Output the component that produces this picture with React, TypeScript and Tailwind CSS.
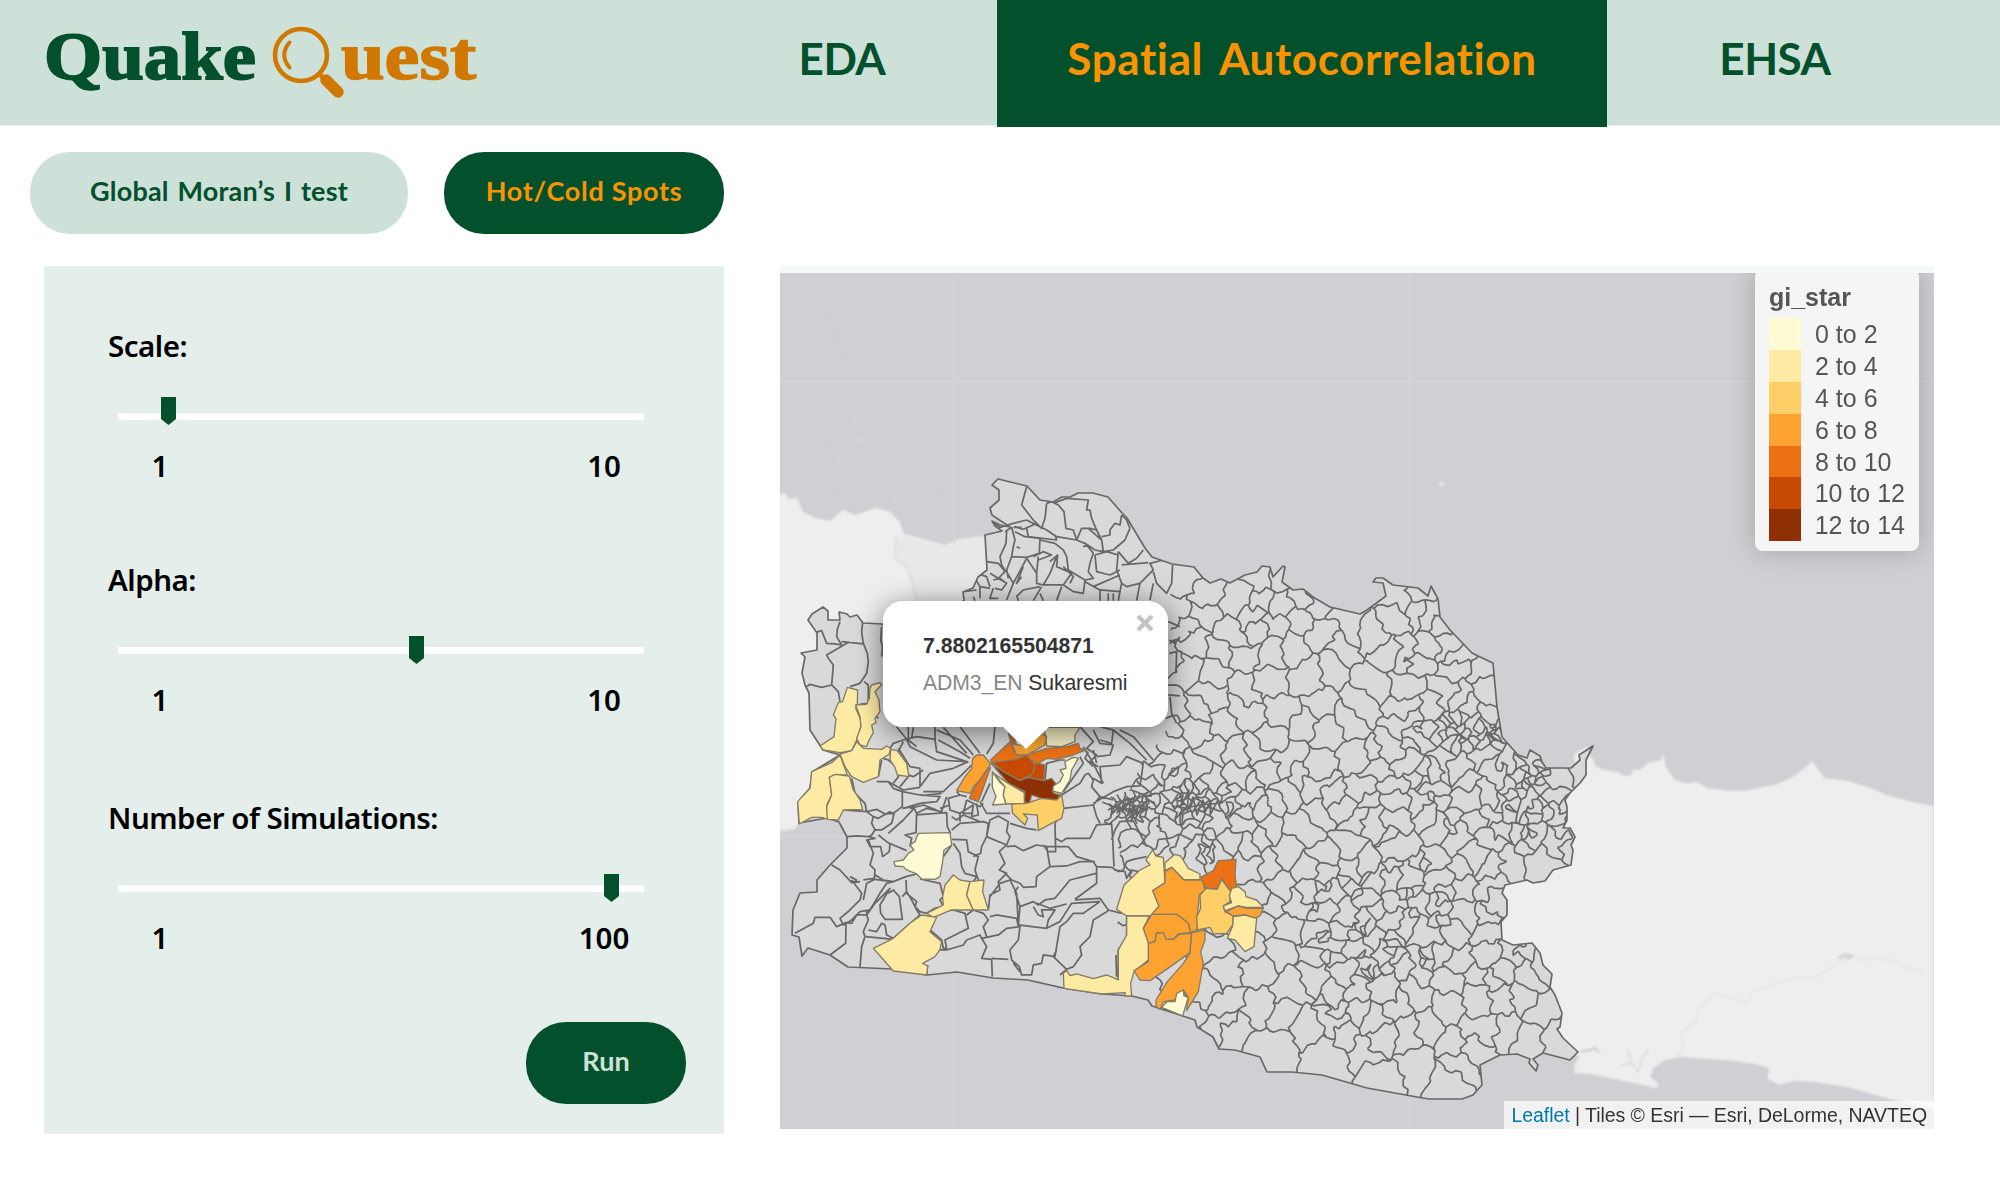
import React from "react";

type Pt = [number, number];

const SANS = "font-['Liberation_Sans',Arial,sans-serif]";

const LAND =
  "808,620 812,614 823,607 828,611 828,620 840,620 839,612 847,614 850,617 857,615 863,623 882,624 900,640 940,625 964,600 963,592 973,588 978,577 987,570 985,535 1002,531 995,526 992,521 1000,525 1010,527 992,515 990,508 999,500 999,490 992,485 998,479 1027,486 1040,500 1053,502 1062,497 1070,497 1078,493 1093,493 1108,497 1122,513 1127,518 1145,548 1152,557 1172,564 1194,567 1203,578 1210,583 1221,579 1230,583 1245,575 1257,572 1262,566 1270,567 1273,577 1283,566 1285,567 1282,582 1293,590 1303,589 1313,597 1330,607 1360,614 1367,610 1386,596 1383,583 1373,582 1376,578 1383,578 1393,585 1418,588 1428,596 1431,586 1438,599 1440,617 1450,630 1472,653 1478,656 1493,663 1497,707 1502,737 1518,755 1527,758 1530,750 1540,756 1542,762 1546,768 1571,768 1580,760 1579,755 1593,746 1586,760 1586,775 1580,783 1570,793 1565,800 1567,807 1567,820 1563,828 1570,828 1575,837 1571,845 1573,850 1571,865 1553,870 1545,881 1533,883 1527,880 1505,885 1502,893 1507,900 1507,915 1501,922 1502,940 1513,945 1532,943 1540,953 1543,965 1552,974 1550,987 1555,995 1562,1013 1560,1027 1557,1029 1563,1038 1578,1052 1570,1060 1543,1053 1533,1059 1538,1065 1536,1071 1529,1063 1530,1059 1517,1054 1500,1055 1480,1065 1482,1085 1473,1095 1462,1099 1429,1099 1417,1097 1367,1088 1322,1075 1292,1072 1267,1072 1260,1057 1235,1050 1219,1049 1213,1037 1197,1027 1195,1020 1152,1006 1148,1000 1132,996 1102,994 1063,988 1028,980 993,978 957,972 927,975 892,969 848,967 830,955 808,948 802,956 799,937 792,935 793,910 800,893 817,892 817,880 830,865 847,848 847,837 839,822 827,818 799,823 798,802 810,788 812,772 840,755 823,750 810,730 809,693 805,685 802,673 805,657 801,653 817,650 817,633";

/* Approximate centres of the districts, in thirds of a pixel from each sheet's origin. */
const SHEETS: { x: number; y: number; pts: number[] }[] = [
  {
    x: 1100, y: 520,
    pts: [250,165,325,215,425,235,470,185,540,190,480,240,545,265,605,235,660,255,320,280,460,290,225,300,260,330,275,370,345,385,405,340,455,340,520,310,600,310,670,330,740,310,815,335,895,300,880,230,950,220,945,280,990,290,255,440,440,420,520,420,590,395,700,440,720,370,610,480,330,470,230,420,340,530,440,520,500,490,820,480,790,550,870,400,920,400,990,380,1050,370,1020,330,1085,410,1150,440,1060,450,940,440,920,510,1040,520,1080,520,1155,520,900,570,1000,560,440,580,540,570,370,610,660,560,600,620,680,650,740,600,330,690,410,690,475,690,530,670,300,640,290,580,230,560,200,620,180,660,110,660,770,720,660,740,560,720,510,760,590,780,330,790,420,780,385,830,450,800,570,830,650,800,700,820,790,800,880,790,830,740,880,690,930,740,1000,820,1000,760,1030,745,1080,760,1100,800,1100,850,960,860,900,850,720,860,950,650,980,620,920,610,1030,620,60,760,150,800,200,750,280,740,60,930,170,930,120,900,1160,580,1130,560,1110,620,1070,640,1190,620,1150,700,1190,760,1240,800,1220,720,1170,830,1230,860,1290,850,1300,720,1370,780,1440,750,1340,830,1380,880,1160,660,1270,760,1310,800],
  },
  {
    x: 1080, y: 800,
    pts: [500,20,560,70,600,20,660,90,720,40,830,50,790,130,890,70,940,60,1030,50,1060,100,1140,110,1180,60,1230,40,1290,40,1350,30,1430,40,1460,130,1340,110,1270,100,1230,120,920,100,960,140,1060,190,860,190,740,170,700,200,610,160,550,110,500,140,500,210,570,210,590,260,660,310,540,290,730,240,820,230,870,230,930,240,990,240,1080,240,1140,200,1180,170,1240,200,1300,180,1370,180,1430,120,1160,270,1220,250,1250,310,1220,330,1070,320,1160,350,1000,320,940,310,850,300,810,340,750,280,720,320,680,270,590,310,560,360,620,370,720,390,800,390,850,370,880,400,940,370,990,360,1040,390,1120,410,1230,400,1290,460,1330,460,1380,490,430,370,410,440,500,430,610,460,440,530,540,510,710,520,790,510,690,470,730,430,840,450,850,500,900,470,960,490,1010,500,1090,530,1080,480,1140,480,1180,520,1230,470,1270,500,1240,550,1330,530,630,560,600,630,530,620,430,620,410,670,570,740,690,680,750,660,760,590,840,560,870,650,840,630,920,570,960,600,1000,580,1110,620,1190,600,1250,590,1320,600,1390,640,1280,690,1200,690,1110,720,1190,740,1030,680,980,700,900,720,860,760,740,770,910,830,990,800,1100,830,1150,790,1350,720,1430,720,800,700,780,620,450,700,340,640,370,580,220,560,260,520,60,430,40,330,100,240,180,170,410,140,350,150,280,150],
  },
  {
    x: 1060, y: 700,
    pts: [180,220,290,220,350,230,250,150,200,410,240,370,320,390,330,430,420,450,490,420,450,370,540,370,590,340,560,310,510,300],
  },
];

/* Dense town clusters: centre, radii, count. */
const CLUSTERS = [
  [1128, 806, 20, 10, 26],
  [1146, 797, 14, 8, 14],
  [1192, 802, 30, 14, 46],
  [1462, 732, 18, 14, 16],
  [1488, 734, 14, 12, 16],
  [1530, 775, 16, 16, 18],
  [1400, 780, 90, 50, 10],
  [1390, 915, 80, 60, 30],
  [1500, 820, 50, 40, 12],
  [1370, 960, 60, 20, 12],
  [1210, 835, 30, 20, 10],
];

type Seed = { p: Pt; g: number };

/* Every district owns a few neighbouring seeds, which gives it an irregular shape. */
function buildSeeds(): Seed[] {
  const seeds: Seed[] = [];
  let s = 7;
  let g = 0;
  const rnd = () => {
    s = (s * 16807) % 2147483647;
    return s / 2147483647;
  };
  SHEETS.forEach(({ x, y, pts }) => {
    for (let i = 0; i < pts.length; i += 2) {
      const cx = x + pts[i] / 3;
      const cy = y + pts[i + 1] / 3;
      g++;
      seeds.push({ p: [cx, cy], g });
      for (let k = 0; k < 3; k++) {
        const a = rnd() * Math.PI * 2;
        const r = 5 + rnd() * 6;
        seeds.push({ p: [cx + Math.cos(a) * r, cy + Math.sin(a) * r], g });
      }
    }
  });
  CLUSTERS.forEach(([cx, cy, rx, ry, n]) => {
    for (let i = 0; i < n; i++) {
      const a = rnd() * Math.PI * 2;
      const r = Math.sqrt(rnd());
      g++;
      seeds.push({ p: [cx + Math.cos(a) * r * rx, cy + Math.sin(a) * r * ry], g });
    }
  });
  return seeds.filter(
    ({ p }, i) => !seeds.slice(0, i).some((q) => Math.hypot(p[0] - q.p[0], p[1] - q.p[1]) < 2.5),
  );
}

function wiggle([x, y]: Pt): Pt {
  return [
    x + 2 * Math.sin(y * 0.41 + x * 0.13) + 0.8 * Math.sin(y * 1.13 - x * 0.7),
    y + 2 * Math.sin(x * 0.37 - y * 0.17) + 0.8 * Math.sin(x * 1.21 + y * 0.6),
  ];
}

function buildBorders(): string {
  const seeds = buildSeeds();
  let d = "";
  seeds.forEach(({ p, g }, i) => {
    let poly: { p: Pt; n: number }[] = [
      { p: [p[0] - 50, p[1] - 50], n: -1 },
      { p: [p[0] + 50, p[1] - 50], n: -1 },
      { p: [p[0] + 50, p[1] + 50], n: -1 },
      { p: [p[0] - 50, p[1] + 50], n: -1 },
    ];
    seeds.forEach(({ p: q }, j) => {
      if (i === j) return;
      const nx = q[0] - p[0];
      const ny = q[1] - p[1];
      if (Math.hypot(nx, ny) > 100) return;
      const mx = (p[0] + q[0]) / 2;
      const my = (p[1] + q[1]) / 2;
      const side = (v: Pt) => (v[0] - mx) * nx + (v[1] - my) * ny;
      const out: { p: Pt; n: number }[] = [];
      poly.forEach((a, k) => {
        const b = poly[(k + 1) % poly.length];
        const sa = side(a.p);
        const sb = side(b.p);
        const t = sa / (sa - sb);
        const c: Pt = [a.p[0] + (b.p[0] - a.p[0]) * t, a.p[1] + (b.p[1] - a.p[1]) * t];
        if (sa <= 0) {
          out.push(a);
          if (sb > 0) out.push({ p: c, n: j });
        } else if (sb <= 0) {
          out.push({ p: c, n: a.n });
        }
      });
      poly = out;
    });
    poly.forEach((a, k) => {
      if (a.n <= i || seeds[a.n].g === g) return;
      const b = poly[(k + 1) % poly.length].p;
      const steps = Math.max(1, Math.round(Math.hypot(b[0] - a.p[0], b[1] - a.p[1]) / 4));
      for (let m = 0; m <= steps; m++) {
        const w = wiggle([a.p[0] + ((b[0] - a.p[0]) * m) / steps, a.p[1] + ((b[1] - a.p[1]) * m) / steps]);
        d += (m ? "L" : "M") + w[0].toFixed(1) + " " + w[1].toFixed(1);
      }
    });
  });
  return d;
}

const BORDERS = buildBorders();

const NORTH_LINES =
  "M165,578 L185,572 200,610 225,612 245,615 230,590 232,568 240,545 M268,605 L200,645 205,655 220,675 215,735 185,742 150,733 140,740 M245,605 L310,612 305,575 308,548 M310,610 L322,640 325,665 320,700 300,730 270,740 M215,735 L235,755 240,785 M312,725 L325,735 325,790 300,793 M365,560 L362,600 368,620 365,650" +
  " M800,140 L785,195 820,240 845,265 855,235 860,190 M875,185 L895,195 912,215 918,265 940,270 950,300 965,265 990,265 1010,270 995,235 990,210 980,210 985,180 920,175 885,188 M1010,270 L1025,300 1030,335 1005,330 975,310 950,300 890,290 860,270 800,240 M1085,225 L1080,255 1065,250 1050,270 1050,285 1025,290 M1110,265 L1095,300 1060,330 1030,335 M1075,335 L1105,370 1130,355 1150,330 M1075,335 L1070,390 1085,430 1100,440 1140,430 1180,390 1170,370 1210,360 M1085,375 L1165,368 M1005,345 L1040,335 1075,345 M1005,345 L1010,395 1050,405 1080,390 M740,275 L738,310 720,350 725,375 738,395 M755,262 L765,300 760,320 755,350 740,390 745,415 M765,275 L795,290 840,295 838,340 800,352 755,350 M800,265 L805,290 890,300 885,285 M840,300 L885,310 910,330 920,350 925,390 975,420 1000,415 985,395 990,370 1000,340 980,315 970,320 M680,365 L715,370 735,395 715,415 690,400 M770,320 L780,325 M820,350 L850,335 875,345 835,360 M800,355 L830,400 830,430 850,435 M790,380 L770,430 785,410 M800,355 L760,430 740,480 M835,350 L830,400 M890,350 L870,400 850,435 910,435 935,400 890,380 893,345 870,365 M910,380 L940,410 930,430 M975,420 L970,460 940,455 910,435 M975,425 L1020,450 1080,455 1085,430 M1000,440 L1080,405 M1020,450 L1020,482 M1045,460 L1045,482 M1060,460 L1060,482 M1080,455 L1075,482 M1140,430 L1130,482 M1180,430 L1170,480 M1180,395 L1190,430 1220,460 1235,430 1238,375 M645,415 L660,440 690,445 M700,420 L720,415 740,430 725,450 705,445 M660,440 L660,475 M700,445 L690,475 715,475 M650,400 L680,410 690,440 M770,470 L790,450 840,440 M845,440 L820,482 M905,440 L890,482 M610,455 L650,450 M770,465 L775,482 M840,460 L850,482 M640,470 L645,482 M1225,545 L1260,560 M1228,600 L1245,610 1260,590 M1228,640 L1250,635 1248,700 M1225,765 L1260,768 M1230,770 L1235,820 1250,850" +
  " M695,245 L720,262 760,250 800,240 M765,260 L790,268 830,250 M785,262 L760,262 M735,275 L755,262 M1085,225 L1100,240 1110,265 M1025,300 L985,265 M860,190 L875,185 M660,400 L680,365 M740,395 L760,430 M715,415 L740,430";

const WEST_LINES =
  "M275,295 L285,340 315,370 320,395 350,388 375,402 400,400 427,380 427,335 400,325 385,305 350,305 M250,390 L320,395 340,410 335,430 345,450 335,465 325,470 290,468 262,470 M340,410 L355,415 390,395 402,402 395,430 365,450 345,450 M355,465 L380,485 388,490 440,512 M427,385 L460,380 470,400 468,458 435,465 455,475 450,500 M385,460 L430,420 462,385 M470,405 L560,398 562,440 572,460 M470,400 L500,385 545,395 560,350 M325,470 L345,475 320,480 330,500 362,500 368,530 388,515 390,490 M325,480 L340,520 330,555 345,570 343,595 310,600 M215,555 L240,570 275,608 300,605 M345,585 L370,600 400,605 438,590 470,582 M270,590 L290,600 280,608 M400,605 L380,610 360,640 330,690 300,695 275,720 250,735 240,715 270,690 300,660 305,640 275,600 M310,660 L320,610 345,598 395,605 M105,760 L160,730 165,712 210,712 230,740 258,728 257,790 210,825 M258,728 L275,730 290,705 320,705 325,720 310,755 315,770 305,800 300,862 M320,705 L345,670 390,625 360,675 362,700 375,718 427,718 418,650 400,630 385,640 M325,750 L350,755 365,730 375,735 380,765 400,775 M318,770 L400,778 M318,700 L330,690 M427,650 L440,635 455,660 470,690 480,705 440,740 400,775 M438,600 L440,640 470,665 465,680 480,695 500,700 525,685 550,680 540,660 550,650 540,610 480,597 M580,490 L600,520 605,560 615,580 650,590 640,605 M575,495 L550,530 M575,478 L620,480 625,515 655,530 645,570 655,600 665,605 M575,450 L600,430 670,425 685,430 680,470 665,500 662,520 640,530 M680,470 L740,495 718,515 735,550 718,570 740,580 715,605 720,630 690,645 685,690 M680,470 L690,420 715,408 745,425 740,455 750,470 740,495 M740,500 L765,498 790,512 830,495 860,500 870,560 830,590 828,620 790,622 780,610 755,600 730,575 M870,560 L920,558 960,545 1005,545 M860,500 L925,500 950,530 1000,545 1010,560 M750,430 L800,445 830,450 M885,430 L887,515 865,515 850,495 M887,475 L905,485 920,475 990,475 1010,435 1055,432 1058,475 1062,560 M1010,560 L1055,562 1075,575 1090,570 1100,545 1120,538 1160,530 M1062,570 L1095,575 1100,595 1115,570 1135,575 M1010,560 L1010,610 945,658 M1008,580 L930,600 885,655 855,660 835,675 820,665 780,680 765,635 775,620 M945,660 L1020,655 1045,690 1085,700 M1055,480 L1065,450 1080,425 1120,422 1150,480 1160,500 M690,710 L710,705 770,715 775,740 M690,650 L720,610 750,600 770,640 775,735 M780,680 L775,735 860,745 865,720 885,690 845,690 850,710 835,705 820,680 M830,670 L870,685 920,672 M860,745 L900,725 935,670 1020,665 M1020,665 L970,700 940,700 920,725 900,740 890,800 885,830 850,825 845,850 820,855 815,885 785,885 778,860 755,840 750,810 775,780 780,740 740,745 715,765 665,775 M1045,692 L1000,720 990,770 960,800 965,825 940,860 920,868 880,830 890,810 M920,868 L900,885 M1100,710 L1100,770 1075,810 1075,900 M1068,825 L1070,890 M665,775 L680,800 665,835 695,838 697,890 M695,835 L745,838 M760,850 L780,875 M665,775 L660,765 620,780 610,795 560,810 530,810 M620,705 L640,690 670,700 685,720 670,740 680,770 M530,700 L510,750 545,780 550,805 560,805 555,780 625,745 615,700 580,690 540,695 M503,855 L500,885 M427,335 L480,345 540,350 530,365 480,370 430,385 M385,305 L430,330 480,322 M480,320 L510,280 580,265 625,245 M490,335 L550,335 570,315 600,290 635,255 M500,345 L545,340 M430,180 L470,170 525,178 530,215 620,245 M415,205 L450,260 480,265 480,320 M410,140 L440,178 450,200 530,240 620,245 M445,140 L445,180 470,200 M460,142 L455,175 M525,140 L525,180 M530,150 L600,180 640,225 M550,142 L620,220 M600,140 L660,220 M535,180 L600,215 630,235 M705,140 L700,190 680,222 M365,240 L355,290 M370,235 L385,240 410,260 415,290 400,310 M445,290 L420,320 M490,270 L460,290 430,280 M390,205 L400,190 430,180 M430,185 L415,215 430,245 M690,310 L665,365 M600,345 L565,355 570,390 600,400 640,375 M570,375 L540,385 M590,335 L600,345 620,350 M600,400 L600,425 M620,360 L610,400 640,400 M640,375 L635,410 655,405 650,370 M660,365 L680,400 750,400 M575,410 L590,420 610,405 660,425 M620,360 L660,380 670,370 M450,385 L490,375 530,390 M345,105 L355,115 M855,300 L860,250 900,240 915,240 M960,230 L970,250 910,335 M910,385 L1000,375 1020,350 995,320 1000,300 985,280 975,285 960,310 905,345 M1000,375 L1010,410 1020,430 M1000,370 L1060,335 1100,320 1140,318 1150,250 1100,230 1080,255 1020,260 1025,310 1000,295 M1020,350 L1060,360 M885,430 L905,400 M970,200 L1000,250 1030,310 M960,140 L1000,185 980,205 1010,225 990,245 1015,260 M1000,150 L1020,190 1060,195 1050,225 1010,230 M1020,140 L1060,150 1110,190 1160,240 M1060,150 L1055,190 1020,180 M1080,150 L1120,170 1180,240 M985,215 L975,235 1000,260 M1000,210 L1010,250";

const DENSE =
  "M1108,804 L1114,809 1111,815 1120,806 1117,813 1126,803 1122,812 1131,800 1128,815 1134,805 1131,822 1138,806 1136,818 1143,804 1140,812 1149,803 1146,799 1155,803 M1108,810 L1122,802 1136,797 1152,796 M1126,796 L1132,802 1142,796 1150,791 M1130,808 L1137,824 M1125,810 L1133,815 1145,808 M1112,807 L1124,808 1134,811 1148,800 M1175,800 L1183,795 1181,806 1189,790 1187,812 1193,797 1197,815 1203,800 1205,812 1211,801 1210,815 1218,800 M1172,806 L1186,808 1200,805 1222,803";

const W_ZONE = "780,470 1150,470 1160,560 1172,600 1165,735 1143,760 1130,790 1102,800 1105,830 1120,850 1115,1000 780,1000";

const COLORED_WEST: [string, string][] = [
  ["#feeba3", "262,22 293,30 292,75 287,85 305,125 298,160 290,180 275,212 240,218 190,210 180,198 222,170 228,115 220,105 235,68 248,65"],
  ["#feeba3", "335,15 360,8 365,15 345,35 357,60 360,95 345,115 348,128 335,135 340,158 325,185 320,200 300,195 290,175 303,140 300,110 287,75 320,73 328,55 330,25"],
  ["#feeba3", "240,222 275,212 290,185 310,205 365,208 380,198 392,205 388,222 360,240 355,290 310,307 275,290 255,260"],
  ["#feeba3", "392,208 412,212 440,250 447,290 412,285 405,262 390,240"],
  ["#feeba3", "240,225 262,285 225,285 208,292 215,345 200,375 205,418 185,412 155,412 118,432 113,365 150,325 155,275 215,248"],
  ["#feeba3", "208,292 225,283 268,288 280,330 300,360 308,388 250,390 235,420 202,418 200,380 215,345"],
  ["#fffbd5", "475,460 570,458 575,495 552,510 548,545 540,590 525,598 485,597 470,582 440,570 430,560 405,558 402,545 430,540 445,520 462,510 450,495 465,485"],
  ["#feeba3", "580,585 600,600 630,605 620,645 640,690 575,690 520,712 500,700 530,685 550,675 548,650 555,615"],
  ["#feeba3", "630,605 672,600 668,635 685,690 640,690 620,645"],
  ["#feeba3", "485,705 530,712 510,755 545,785 540,808 525,830 488,850 503,858 500,885 400,873 340,805 400,775 450,730"],
  ["#fea332", "650,225 670,225 692,252 660,300 640,320 632,340 590,332 615,290 635,265 638,235"],
  ["#eb7114", "692,262 675,310 655,365 628,355 645,320 660,300 680,270"],
  ["#eb7114", "692,240 750,185 770,225 800,225 770,240 695,248"],
  ["#c64a02", "695,248 770,238 800,225 825,255 820,280 780,302 740,280"],
  ["#c64a02", "825,248 855,255 852,302 805,292 822,275"],
  ["#8e3004", "695,252 740,280 780,302 805,292 852,302 875,295 890,315 880,340 902,345 890,360 845,355 815,345 808,372 793,365 795,335 745,310"],
  ["#eb7114", "800,225 860,205 920,200 955,190 960,205 978,210 940,225 890,238 860,235 832,252 820,245"],
  ["#fffbd5", "940,232 955,235 935,270 930,300 905,340 878,333 880,318 900,305 910,285 900,270 918,265 915,245"],
  ["#f4edc4", "850,142 960,142 945,165 945,185 905,200 860,198 858,170"],
  ["#f2a02f", "845,160 860,170 855,195 800,225 770,225 755,190 800,200"],
  ["#c95f16", "745,160 765,180 770,195 752,185"],
  ["#fffbd5", "697,275 718,305 735,320 730,345 738,372 698,375 708,350 697,320"],
  ["#feeba3", "700,280 745,310 793,338 793,370 738,372 730,345 735,320"],
  ["#fecf66", "755,372 800,370 845,355 890,360 905,345 912,385 905,415 885,425 835,452 832,405 790,402 803,415 795,435 758,400"],
];

const COLORED_SOUTH: [string, string][] = [
  ["#feeba3", "218,150 228,168 250,172 255,248 220,275 237,318 225,340 210,348 140,348 110,328 132,255 180,210 210,195 198,180"],
  ["#feeba3", "255,188 285,163 302,168 325,205 360,222 360,238 312,240 275,202 255,212"],
  ["#fea332", "275,202 312,240 368,240 375,270 358,285 352,350 352,390 332,398 325,370 290,343 215,343 237,318 218,272 255,248 255,215"],
  ["#eb7114", "415,182 468,178 465,225 470,262 452,275 425,235 412,268 375,262 362,232 400,212"],
  ["#fecf66", "425,238 452,275 450,305 430,318 435,335 460,348 458,375 440,400 400,402 390,382 352,390 350,350 362,325 360,285 378,265 412,268"],
  ["#feeba3", "455,265 475,260 495,275 498,290 530,300 550,322 500,322 475,318 435,333 430,318 455,308 448,288"],
  ["#fea332", "438,335 475,318 500,325 550,325 540,348 522,355 495,345 460,348"],
  ["#feeba3", "460,350 495,345 530,355 522,440 495,455 465,420 442,415 458,378"],
  ["#feeba3", "140,348 208,348 190,385 212,440 205,480 162,515 152,550 155,588 135,588 135,578 65,582 -48,565 -50,520 -40,512 -30,527 -10,522 40,536 80,525 115,540 115,450 140,405"],
  ["#fea332", "215,343 290,343 325,370 332,398 295,402 280,418 258,418 250,400 230,398 225,425 205,430 190,385"],
  ["#fea332", "205,430 225,425 230,400 250,398 258,418 280,418 300,402 335,400 330,458 250,515 210,542 180,540 162,512 205,485"],
  ["#fea332", "335,398 375,390 375,420 362,455 370,490 355,575 320,632 325,592 310,570 285,600 250,605 240,628 228,620 228,600 262,545 310,490 330,460"],
  ["#fffbd5", "245,622 262,605 285,605 290,580 310,570 312,588 325,592 308,648"],
];

const EAST_COAST =
  "0,300 100,170 225,135 222,102 262,80 272,112 283,120 282,135 310,150 350,155 375,168 395,165 398,150 420,150 445,128 485,120 492,100 495,135 525,180 560,190 590,186 625,205 700,213 750,210 830,193 880,170 920,140 935,122 975,175 1040,182 1110,203 1160,225 1240,247 1302,258 1302,1170 1180,1140 1050,1103 940,1085 885,1082 835,1095 802,1075 808,1045 770,1033 700,1022 540,1010 490,1022 460,1045 450,1070 475,1090 470,1105 400,1088 270,1062 222,1060 225,1030 240,1010 0,900";

function ChoroplethMap() {
  return (
    <svg viewBox="780 273 1154 856" className="block h-[856px] w-[1154px]">
      <defs>
        <clipPath id="province">
          <polygon points={LAND} />
        </clipPath>
        <filter id="soft">
          <feGaussianBlur stdDeviation="0.8" />
        </filter>
      </defs>
      <rect x="780" y="273" width="1154" height="856" fill="#d0cfd4" />

      <g filter="url(#soft)">
        <polygon fill="#eeeeee" points="770,498 785,493 788,499 797,498 803,512 815,518 830,521 843,510 855,515 876,508 890,512 900,522 904,534 930,541 945,545 960,539 990,536 1000,600 900,800 799,823 795,829 770,832" />
        <polygon fill="#e8e8e8" points="896,537 904,537 932,542 945,545 960,539 986,536 986,605 918,605 912,580 907,566 897,558" />
        <path d="M896,537 L895,558 906,566 912,582 917,600" fill="none" stroke="#dcdcdc" strokeWidth="2" />
        <polygon transform="translate(1500 720) scale(.3333)" fill="#eeeeee" points={EAST_COAST} />
        <g transform="translate(1500 720) scale(.3333)" fill="none" stroke="#e2e2e4" strokeWidth="4">
          <path d="M1270,750 L1220,745 1180,722 1120,715 1085,722 1050,708 1000,740 940,775 880,775 800,800 758,810 740,850 700,835 645,822 595,870 590,900 545,940 550,985 535,1010" />
          <path stroke="#d0cfd4" strokeWidth="8" d="M240,995 L270,990 285,985 298,998 M1015,715 L1035,705 1055,708 1040,718" />
          <path d="M385,990 L395,1030 415,1055 425,1020 445,985 M395,1030 L360,1035" stroke="#d6d5da" />
        </g>
        <g fill="none" stroke="#dbdbde" strokeWidth="1.4" strokeLinecap="round">
          <path d="M829,319 l1,3 M834,335 l0,2 M848,352 l2,3 M849,366 l1,4 M846,384 l2,1 M851,398 l1,4 M853,418 l1,5 M858,436 l1,8 M831,441 l3,1 M836,460 l4,1 M861,483 l1,1 M893,498 l4,1 M943,492 l3,0 M839,492 l1,0" />
          <circle cx="1441.500" cy="484" r="1.500" stroke="#ececec" />
        </g>
      </g>

      <g stroke="#d8d8da" strokeWidth="1">
        <path d="M954.500,273 V545 M954.500,973 V1129 M1410,273 V600 M1410,1096 V1129 M780,381.500 H1934 M780,836.500 H845" />
      </g>

      <polygon points={LAND} fill="#d9d9d9" />
      <g clipPath="url(#province)" fill="none" stroke="#686868" strokeLinejoin="round">
        <path d={BORDERS} strokeWidth="1.700" />
        <polygon points={W_ZONE} fill="#d9d9d9" stroke="none" />
        <path transform="translate(760 440) scale(.3333)" d={NORTH_LINES} strokeWidth="5.200" />
        <path transform="translate(760 680) scale(.3333)" d={WEST_LINES} strokeWidth="5.200" />
        <path d={DENSE} strokeWidth="1.600" />
      </g>
      <polygon points={LAND} fill="none" stroke="#686868" strokeWidth="1.700" strokeLinejoin="round" />

      <g transform="translate(760 680) scale(.3333)" stroke="#857c66" strokeWidth="4" strokeLinejoin="round">
        {COLORED_WEST.map(([fill, pts]) => (
          <polygon key={pts} fill={fill} points={pts} />
        ))}
      </g>
      <g transform="translate(1080 800) scale(.3333)" stroke="#857c66" strokeWidth="4" strokeLinejoin="round">
        {COLORED_SOUTH.map(([fill, pts]) => (
          <polygon key={pts} fill={fill} points={pts} />
        ))}
      </g>
    </svg>
  );
}

const LEGEND: [string, string][] = [
  ["#fffbd5", "0 to 2"],
  ["#feeba3", "2 to 4"],
  ["#fecf66", "4 to 6"],
  ["#fea332", "6 to 8"],
  ["#eb7114", "8 to 10"],
  ["#c64a02", "10 to 12"],
  ["#8e3004", "12 to 14"],
];

function Legend() {
  return (
    <div className={`absolute -top-1 right-[15px] h-[282px] w-[164px] rounded-lg bg-[#f5f5f5] px-[14px] pt-[12px] text-[#555] shadow-[0_0_28px_rgba(0,0,0,0.22)] ${SANS}`}>
      <div className="mb-[5px] h-8 text-[25px] leading-8 font-bold">gi_star</div>
      {LEGEND.map(([color, label]) => (
        <div key={label} className="flex h-[31.9px] items-center">
          <span className="h-full w-8" style={{ backgroundColor: color }} />
          <span className="ml-[14px] text-[25px] leading-8 whitespace-nowrap">{label}</span>
        </div>
      ))}
    </div>
  );
}

function Popup() {
  return (
    <div className={`absolute top-[328px] left-[103px] h-[126px] w-[285px] ${SANS}`}>
      <div className="absolute inset-0 rounded-[20px] shadow-[0_5px_28px_rgba(0,0,0,0.5)]" />
      <svg viewBox="0 0 48 23" className="absolute top-[125px] left-[119px] h-[23px] w-12">
        <path d="M0,0 H48 L24,23 Z" fill="#fff" />
      </svg>
      <div className="relative h-full rounded-[20px] bg-white pt-[28px] pl-[40px] text-[21.200px] text-[#333]">
        <div className="h-[37px] leading-[34px] font-bold">7.8802165504871</div>
        <div className="h-[37px] leading-[34px] tracking-[-0.100px]">
          <span className="text-[#888]">ADM3_EN</span> Sukaresmi
        </div>
        <svg viewBox="0 0 18 18" className="absolute top-[13px] right-[14px] size-[18px]">
          <path d="M2,2 L16,16 M16,2 L2,16" stroke="#c3c3c3" strokeWidth="4.500" />
        </svg>
      </div>
    </div>
  );
}

function Logo() {
  return (
    <svg viewBox="0 -24 440 126" className="ml-[42px] h-[126px] w-[440px]" fontFamily="'Liberation Serif', serif" fontWeight="700">
      <text x="2" y="54.500" fontSize="68" textLength="212" lengthAdjust="spacingAndGlyphs" fill="#03502c" stroke="#03502c" strokeWidth="1.800">
        Quake
      </text>
      <g fill="none" stroke="#d07800">
        <circle cx="259" cy="31" r="26" strokeWidth="4.600" />
        <path d="M247.500,18.500 Q237,31 247.500,43.500" strokeWidth="4" strokeLinecap="round" />
        <path d="M276,49 L285,57" strokeWidth="5" />
        <path d="M284,56 L296,68" strokeWidth="11.500" strokeLinecap="round" />
      </g>
      <text x="299" y="54.500" fontSize="68" textLength="135" lengthAdjust="spacingAndGlyphs" fill="#d07800" stroke="#d07800" strokeWidth="1.500">
        uest
      </text>
    </svg>
  );
}

type SliderProps = { label: string; max: string; height: string; thumb: string };

function Slider({ label, max, height, thumb }: SliderProps) {
  return (
    <div className={`font-['Noto_Sans',sans-serif] text-[29.500px] font-semibold text-black ${height}`}>
      <div className="h-10 pl-[64px] leading-[39px] tracking-[-0.500px]">{label}</div>
      <div className="relative mt-[47px] ml-[74px] h-[6.500px] w-[526px] bg-white">
        <svg viewBox="0 0 15 28" className={`absolute h-7 w-[15px] ${thumb}`}>
          <path d="M0,0 H15 V22 L7.500,28 L0,22 Z" fill="#03502c" />
        </svg>
      </div>
      <div className="mt-[26.500px] flex h-10 leading-10">
        <span className="ml-[96px] w-10 text-center">1</span>
        <span className="ml-[384px] w-20 text-center">{max}</span>
      </div>
    </div>
  );
}

export default function App() {
  return (
    <div className="h-[1200px] w-[2000px] overflow-hidden bg-white font-['Lato',sans-serif] [font-variant-ligatures:none]">
      <header className="flex h-[126px] border-b border-[#e4eeea] bg-[#cde1d8] text-[44px] font-bold text-[#03502c]">
        <div className="w-[687px]">
          <Logo />
        </div>
        <nav className="flex h-[127px] leading-[117px]">
          <a className="w-[310px] text-center tracking-[-0.500px]">EDA</a>
          <a className="w-[610px] bg-[#03502c] text-center tracking-[0.600px] text-[#fb9300] [word-spacing:6px]">
            Spatial Autocorrelation
          </a>
          <a className="w-[336px] text-center tracking-[-0.500px]">EHSA</a>
        </nav>
      </header>

      <div className="mt-[26px] ml-[30px] flex h-[82px] gap-9 text-[27px] leading-[76px] font-bold">
        <button className="w-[378px] rounded-[40px] bg-[#cde1d8] pb-[5px] text-center tracking-[0.200px] text-[#03502c] [word-spacing:2px]">
          Global Moran’s I test
        </button>
        <button className="w-[280px] rounded-[40px] bg-[#03502c] pb-[5px] text-center tracking-[0.700px] text-[#fb9300]">
          Hot/Cold Spots
        </button>
      </div>

      <main className="mt-8 ml-11 flex gap-14">
        <section className="h-[868px] w-[680px] bg-[#e4eeea] pt-[60px]">
          <Slider label="Scale:" max="10" height="h-[234px]" thumb="left-[43px] -top-4" />
          <Slider label="Alpha:" max="10" height="h-[238px]" thumb="left-[291px] -top-[11px]" />
          <Slider label="Number of Simulations:" max="100" height="h-[236px]" thumb="left-[486px] -top-[11px]" />
          <button className="mt-[-12px] ml-[482px] block h-[82px] w-40 rounded-[40px] bg-[#03502c] pb-1 text-[27px] font-bold text-[#cde1d8]">
            Run
          </button>
        </section>

        <section className="h-[863px] w-[1154px] border-t-[7px] border-[#f3f8f8]">
          <div className="relative h-[856px] overflow-hidden">
            <ChoroplethMap />
            <Popup />
            <Legend />
            <div className={`absolute right-0 bottom-0 h-[28px] w-[430px] bg-white/70 pr-[7px] text-right text-[19.500px] leading-[29px] tracking-[-0.050px] whitespace-nowrap text-[#333] ${SANS}`}>
              <span className="text-[#0078a8]">Leaflet</span> | Tiles © Esri — Esri, DeLorme, NAVTEQ
            </div>
          </div>
        </section>
      </main>
    </div>
  );
}
